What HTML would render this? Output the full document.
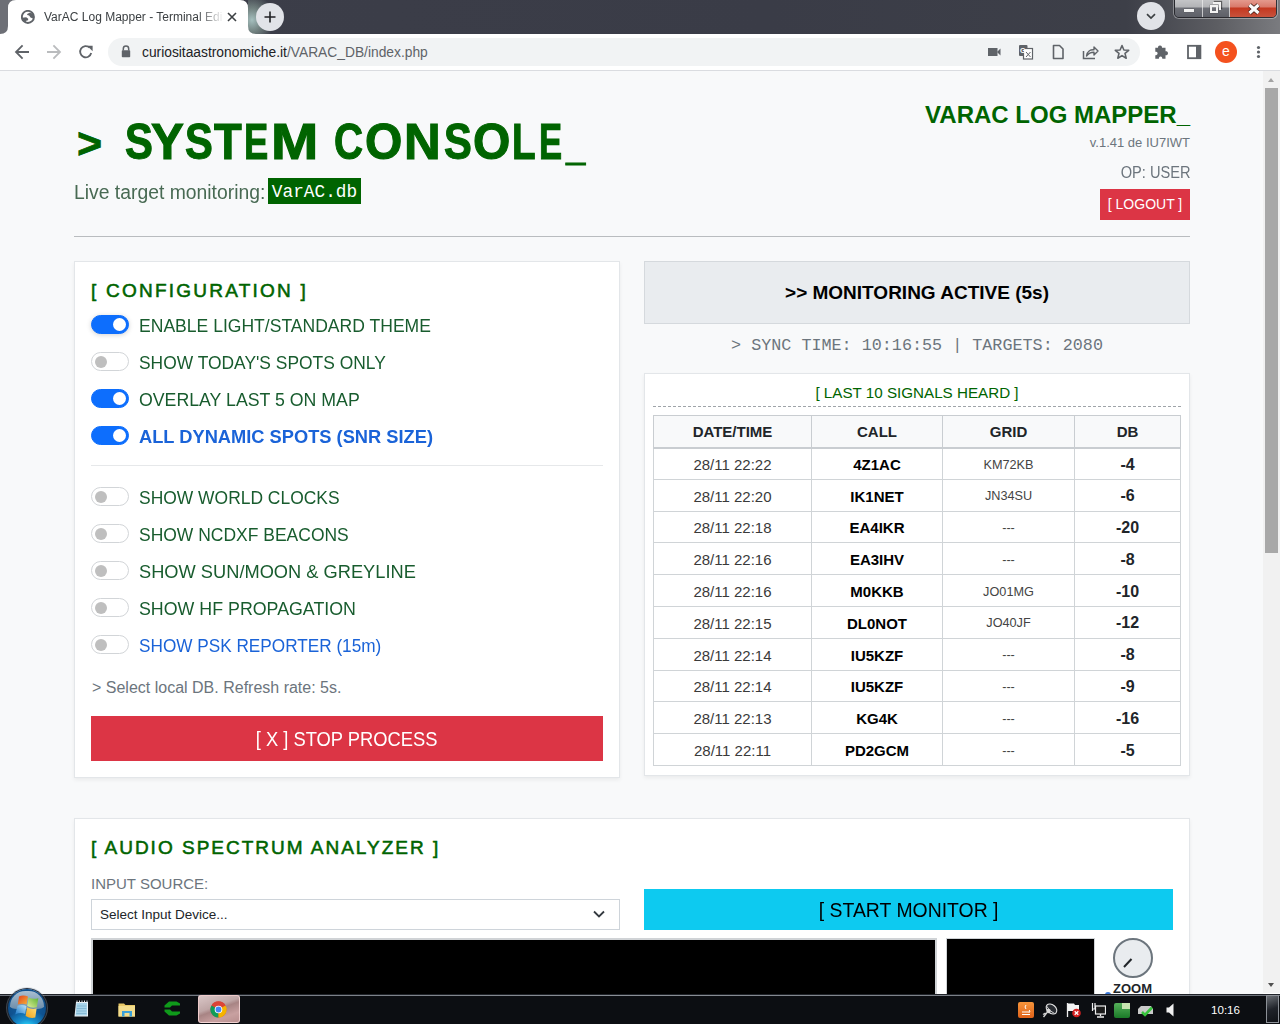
<!DOCTYPE html>
<html><head><meta charset="utf-8">
<style>
*{box-sizing:border-box;margin:0;padding:0}
html,body{width:1280px;height:1024px;overflow:hidden;background:#f8f9fa;font-family:"Liberation Sans",sans-serif;position:relative}
.abs{position:absolute}
/* chrome */
#strip{left:0;top:0;width:1280px;height:34px;background:linear-gradient(90deg,#6d6f76 0,#6d6f76 16px,#3c3e49 16px,#3a3c47 60%,#3d3f48 88%,#5c5d62 95%,#7a7b7f 100%)}
#tab{left:8px;top:0;width:240px;height:34px;background:#fff;border-radius:8px 8px 0 0}
#toolbar{left:0;top:34px;width:1280px;height:36px;background:#fff}
#tbline{left:0;top:70px;width:1280px;height:1px;background:#dadce0}
#omni{left:108px;top:38px;width:1032px;height:28px;background:#f1f3f4;border-radius:14px}
.ctext{font-size:12px;color:#3c4043}
/* page */
#page{left:0;top:71px;width:1263px;height:924px;background:#f8f9fa;overflow:hidden}
#sb{left:1263px;top:71px;width:17px;height:924px;background:#f1f1f1}
#sbthumb{left:1265px;top:88px;width:13px;height:465px;background:#a8a8a8}
.green{color:#006400}
.card{position:absolute;background:#fff;border:1px solid #e3e6e9;box-shadow:0 2px 4px rgba(0,0,0,.06)}
.cfgtitle{font-size:19px;font-weight:normal;-webkit-text-stroke:0.55px #006400;letter-spacing:2.23px;white-space:nowrap}
.sw{position:absolute;left:91px;width:38px;height:19px;border-radius:10px;background:#fff;border:1px solid #d2d5d8}
.sw::after{content:"";position:absolute;left:2.5px;top:2.5px;width:12px;height:12px;border-radius:50%;background:#bfbfbf}
.sw.on{background:#0d6efd;border-color:#0d6efd}
.sw.on::after{left:21px;background:#fff;width:13px;height:13px;top:2px}
.lbl{position:absolute;left:139px;font-size:18px;color:#185c2e;white-space:nowrap;transform-origin:0 0}
.blue{color:#1a63d8}
.b{font-weight:bold}
.tbl{border-collapse:collapse;table-layout:fixed;width:527px;background:#fff}
.tbl th,.tbl td{border:1px solid #d0d4d7;text-align:center;padding:0;white-space:nowrap}
.tbl th{height:32px;font-size:15px;font-weight:bold;color:#212529;background:#f8f9fa;border-bottom:2px solid #c9cdd1;border-color:#c9cdd1}
.tbl td{height:31.8px;color:#212529;padding-top:2px}
.tbl td.dt{font-size:15px;color:#3a3a3a}
.tbl td.cl{font-size:15px;font-weight:bold;color:#000}
.tbl td.gr{font-size:12.7px;color:#444}
.tbl td.db{font-size:16px;font-weight:bold;color:#212529}
/* taskbar */
#taskbar{left:0;top:994px;width:1280px;height:30px;background:#0c0e12;border-top:1px solid #202329}
</style></head><body>
<div id="strip" class="abs"></div>
<div class="abs" style="left:248px;top:0;width:50px;height:34px;background:radial-gradient(ellipse 22px 26px at 4px 20px,rgba(170,198,196,.95) 0,rgba(150,175,165,.6) 45%,rgba(60,62,73,0) 100%)"></div>
<svg class="abs" style="left:0;top:0" width="260" height="34" viewBox="0 0 260 34">
<path d="M0 34 Q8 34 8 26 L8 8 Q8 0 16 0 L240 0 Q248 0 248 8 L248 26 Q248 34 256 34 Z" fill="#fff"/>
</svg>
<svg class="abs" style="left:21px;top:10px" width="14" height="14" viewBox="0 0 14 14"><circle cx="6.9" cy="6.9" r="6.05" fill="#fff" stroke="#5f6368" stroke-width="1.9"/><path d="M6.2 4.1 L9 2.4 L11.8 3.8 L13.2 7.8 L11.8 8.4 L9.5 7.4 L8.1 5.6 L6.2 5.1 Z" fill="#5f6368"/><path d="M1 7.8 L5.2 7.3 L7.2 8.8 L7.1 10.2 L5.3 10.8 L4.4 12.2 L2.5 11.6 L1 9.5 Z" fill="#5f6368"/></svg>
<div class="abs" style="left:44px;top:10px;width:180px;height:18px;overflow:hidden;font-size:12px;color:#3c4043;white-space:nowrap;-webkit-mask-image:linear-gradient(90deg,#000 85%,transparent 100%)">VarAC Log Mapper - Terminal Edi</div>
<svg class="abs" style="left:226px;top:11px" width="12" height="12" viewBox="0 0 12 12"><path d="M2 2 L10 10 M10 2 L2 10" stroke="#3c4043" stroke-width="1.6"/></svg>
<div class="abs" style="left:256px;top:3px;width:28px;height:28px;border-radius:50%;background:#e1e3e8"></div>
<svg class="abs" style="left:264px;top:11px" width="12" height="12" viewBox="0 0 12 12"><path d="M6 0.5 V11.5 M0.5 6 H11.5" stroke="#202124" stroke-width="1.6"/></svg>
<div class="abs" style="left:1137px;top:2px;width:28px;height:28px;border-radius:50%;background:#e1e3e8"></div>
<svg class="abs" style="left:1145px;top:10px" width="12" height="12" viewBox="0 0 12 12"><path d="M2 4.2 L6 8 L10 4.2" fill="none" stroke="#3c4043" stroke-width="1.7"/></svg>
<!-- window buttons -->
<div class="abs" style="left:1174px;top:-3px;width:103px;height:21px;border:1px solid rgba(30,30,35,.8);border-radius:0 0 5px 5px;box-shadow:0 0 0 1px rgba(255,255,255,.35);overflow:hidden">
 <div class="abs" style="left:0;top:0;width:28px;height:20px;background:linear-gradient(#c9cacc 0,#b2b3b6 45%,#6e7077 50%,#5c5e66 100%);border-right:1px solid rgba(240,240,240,.7)"></div>
 <div class="abs" style="left:28px;top:0;width:27px;height:20px;background:linear-gradient(#c9cacc 0,#b2b3b6 45%,#6e7077 50%,#5c5e66 100%);border-right:1px solid rgba(240,240,240,.7)"></div>
 <div class="abs" style="left:55px;top:0;width:48px;height:20px;background:linear-gradient(#e7a397 0,#d9796a 45%,#c43820 50%,#c8553f 100%)"></div>
 <div class="abs" style="left:9px;top:11px;width:10px;height:3px;background:#f2f2f2;box-shadow:0 0 1px #333"></div>
 <div class="abs" style="left:38px;top:4px;width:8px;height:8px;border-top:2px solid #f2f2f2;border-right:2px solid #f2f2f2;box-shadow:1px -1px 1px rgba(0,0,0,.5)"></div>
 <div class="abs" style="left:35px;top:7px;width:8px;height:8px;border:2px solid #f2f2f2;box-shadow:0 0 1px #333"></div>
 <svg class="abs" style="left:72px;top:5px" width="14" height="12" viewBox="0 0 14 12"><path d="M2.5 2 L11.5 10 M11.5 2 L2.5 10" stroke="#3a1a14" stroke-width="4.8"/><path d="M2.5 2 L11.5 10 M11.5 2 L2.5 10" stroke="#fafafa" stroke-width="3.2"/></svg>
</div>
<div id="toolbar" class="abs"></div>
<div id="tbline" class="abs"></div>
<svg class="abs" style="left:14px;top:44px" width="16" height="16" viewBox="0 0 16 16"><path d="M15 8 H2.5 M8.6 1.4 L2 8 L8.6 14.6" fill="none" stroke="#5f6368" stroke-width="1.8"/></svg>
<svg class="abs" style="left:46px;top:44px" width="16" height="16" viewBox="0 0 16 16"><path d="M1 8 H13.5 M7.4 1.4 L14 8 L7.4 14.6" fill="none" stroke="#babcbe" stroke-width="1.8"/></svg>
<svg class="abs" style="left:78px;top:44px" width="16" height="16" viewBox="0 0 16 16"><path d="M13.2 9 A5.6 5.6 0 1 1 11.6 3.6" fill="none" stroke="#5f6368" stroke-width="1.8"/><path d="M9.2 1.8 L14.6 1.8 L14.6 7.2 Z" fill="#5f6368"/></svg>
<div id="omni" class="abs"></div>
<svg class="abs" style="left:121px;top:45px" width="10" height="13" viewBox="0 0 10 13"><path d="M2.3 5.5 V3.8 A2.7 2.7 0 0 1 7.7 3.8 V5.5" fill="none" stroke="#5f6368" stroke-width="1.5"/><rect x="0.8" y="5.2" width="8.4" height="7" rx="0.8" fill="#5f6368"/></svg>
<div class="abs" style="left:142px;top:45px;font-size:13.8px;color:#202124;white-space:nowrap">curiositaastronomiche.it<span style="color:#5f6368">/VARAC_DB/index.php</span></div>
<svg class="abs" style="left:986px;top:45px" width="16" height="14" viewBox="0 0 16 14"><rect x="2" y="3" width="9.5" height="8" fill="#5f6368"/><path d="M11 7 L14.5 3.5 V10.5 Z" fill="#5f6368"/></svg>
<svg class="abs" style="left:1018px;top:44px" width="16" height="16" viewBox="0 0 16 16"><rect x="1" y="1" width="8.5" height="11" rx="1" fill="#5f6368"/><rect x="5.5" y="4.5" width="9" height="10.5" fill="#fff" stroke="#5f6368" stroke-width="1.2"/><text x="2" y="9" font-size="7" font-family="Liberation Sans" font-weight="bold" fill="#fff">G</text><path d="M8 8 L12.5 13 M12.5 8 L8 13" stroke="#5f6368" stroke-width="1"/></svg>
<svg class="abs" style="left:1050px;top:44px" width="16" height="16" viewBox="0 0 16 16"><path d="M3.5 1.5 H9.5 L13 5 V14.5 H3.5 Z" fill="none" stroke="#5f6368" stroke-width="1.6" stroke-linejoin="round"/></svg>
<svg class="abs" style="left:1082px;top:44px" width="17" height="16" viewBox="0 0 17 16"><path d="M1.5 7 V14.5 H13" fill="none" stroke="#5f6368" stroke-width="1.5"/><path d="M4.5 12 C5 7.5 8.5 5.5 12 5.8 V3 L16 7 L12 11 V8.3 C9 8.2 6.5 9.5 4.5 12 Z" fill="none" stroke="#5f6368" stroke-width="1.4" stroke-linejoin="round"/></svg>
<svg class="abs" style="left:1114px;top:44px" width="16" height="16" viewBox="0 0 16 16"><path d="M8 1.5 L9.9 6 L14.7 6.3 L11 9.4 L12.2 14.2 L8 11.6 L3.8 14.2 L5 9.4 L1.3 6.3 L6.1 6 Z" fill="none" stroke="#5f6368" stroke-width="1.6" stroke-linejoin="round"/></svg>
<svg class="abs" style="left:1154px;top:44px" width="16" height="16" viewBox="0 0 16 16"><path d="M6 1.5 C7.8 1.5 8 2.6 8 3.8 H11.5 V7.3 C12.6 7.3 14 7.6 14 9.3 C14 11 12.6 11.3 11.5 11.3 V14.8 H8.3 C8.3 13.6 8 12.5 6.6 12.5 C5.2 12.5 4.9 13.6 4.9 14.8 H1.3 V11.2 C2.5 11.2 3.6 10.9 3.6 9.5 C3.6 8.1 2.5 7.8 1.3 7.8 V3.8 H4 C4 2.6 4.2 1.5 6 1.5 Z" fill="#5f6368"/></svg>
<svg class="abs" style="left:1186px;top:44px" width="16" height="16" viewBox="0 0 16 16"><rect x="2" y="1.8" width="12.4" height="12.4" fill="none" stroke="#5f6368" stroke-width="1.8"/><rect x="10" y="1.8" width="4.4" height="12.4" fill="#5f6368"/></svg>
<div class="abs" style="left:1215px;top:41px;width:22px;height:22px;border-radius:50%;background:#f4511e;color:#fff;font-size:14px;text-align:center;line-height:21px">e</div>
<svg class="abs" style="left:1254px;top:44px" width="9" height="16" viewBox="0 0 9 16"><circle cx="4.5" cy="3.5" r="1.6" fill="#5f6368"/><circle cx="4.5" cy="8" r="1.6" fill="#5f6368"/><circle cx="4.5" cy="12.5" r="1.6" fill="#5f6368"/></svg>
<div id="page" class="abs"></div>
<div id="sb" class="abs"></div>
<div id="sbthumb" class="abs"></div>

<!-- header -->
<div class="abs green" style="left:77px;top:119px;font-size:43px;font-weight:bold;white-space:nowrap;-webkit-text-stroke:0.8px #006400">&gt;</div><div class="abs green" style="left:0;top:112.5px;font-size:50px;font-weight:bold;white-space:nowrap;width:0;height:0;-webkit-text-stroke:1.1px #006400"><span class="abs" style="left:124.58px;top:0;transform:scaleX(0.836);transform-origin:0 0">S</span><span class="abs" style="left:151.02px;top:0;transform:scaleX(0.984);transform-origin:0 0">Y</span><span class="abs" style="left:184.73px;top:0;transform:scaleX(0.834);transform-origin:0 0">S</span><span class="abs" style="left:213.75px;top:0;transform:scaleX(0.908);transform-origin:0 0">T</span><span class="abs" style="left:244.42px;top:0;transform:scaleX(0.728);transform-origin:0 0">E</span><span class="abs" style="left:270.59px;top:0;transform:scaleX(1.136);transform-origin:0 0">M</span><span class="abs" style="left:333.99px;top:0;transform:scaleX(0.806);transform-origin:0 0">C</span><span class="abs" style="left:364.98px;top:0;transform:scaleX(0.960);transform-origin:0 0">O</span><span class="abs" style="left:404.45px;top:0;transform:scaleX(1.017);transform-origin:0 0">N</span><span class="abs" style="left:444.13px;top:0;transform:scaleX(0.834);transform-origin:0 0">S</span><span class="abs" style="left:472.78px;top:0;transform:scaleX(0.960);transform-origin:0 0">O</span><span class="abs" style="left:512.38px;top:0;transform:scaleX(0.773);transform-origin:0 0">L</span><span class="abs" style="left:539.32px;top:0;transform:scaleX(0.693);transform-origin:0 0">E</span><span class="abs" style="left:565.50px;top:0;transform:scaleX(0.697);transform-origin:0 0">_</span></div>
<div class="abs" style="left:74px;top:181px;font-size:20px;color:#486a53;white-space:nowrap;transform:scaleX(0.967);transform-origin:0 0">Live target monitoring:</div><div class="abs" style="left:268px;top:178px;width:93px;height:26px;background:#006400;color:#fff;font-family:'Liberation Mono',monospace;font-size:17.8px;line-height:28px;text-align:center">VarAC.db</div>
<div class="abs" style="left:74px;top:236px;width:1116px;height:1px;background:#b9bcbf"></div>

<div class="abs green" style="right:90px;top:101px;font-size:24px;font-weight:bold;white-space:nowrap">VARAC LOG MAPPER_</div>
<div class="abs" style="right:90px;top:135px;font-size:13px;color:#6c757d;white-space:nowrap">v.1.41 de IU7IWT</div>
<div class="abs" style="right:90px;top:164px;font-size:16px;color:#6c757d;white-space:nowrap;transform:scaleX(0.913);transform-origin:100% 0">OP: USER</div>
<div class="abs" style="left:1100px;top:189px;width:90px;height:31px;background:#dc3545;color:#fff;font-size:14px;text-align:center;line-height:31px">[ LOGOUT ]</div>

<!-- config card -->
<div class="card" style="left:74px;top:261px;width:546px;height:517px"></div>
<div class="abs green cfgtitle" style="left:91px;top:280px">[ CONFIGURATION ]</div>
<div class="sw on" style="top:315px;box-shadow:0 1px 5px rgba(0,0,0,.18)"></div><div class="lbl" style="top:316px;transform:scaleX(0.975)">ENABLE LIGHT/STANDARD THEME</div>
<div class="sw" style="top:352px"></div><div class="lbl" style="top:353px;transform:scaleX(0.967)">SHOW TODAY'S SPOTS ONLY</div>
<div class="sw on" style="top:389px"></div><div class="lbl" style="top:390px;transform:scaleX(0.985)">OVERLAY LAST 5 ON MAP</div>
<div class="sw on" style="top:426px"></div><div class="lbl blue b" style="top:427px;transform:scaleX(1.015)">ALL DYNAMIC SPOTS (SNR SIZE)</div>
<div class="abs" style="left:91px;top:465px;width:512px;height:1px;background:#e6e8ea"></div>
<div class="sw" style="top:487px"></div><div class="lbl" style="top:488px;transform:scaleX(0.969)">SHOW WORLD CLOCKS</div>
<div class="sw" style="top:524px"></div><div class="lbl" style="top:525px;transform:scaleX(0.971)">SHOW NCDXF BEACONS</div>
<div class="sw" style="top:561px"></div><div class="lbl" style="top:562px;transform:scaleX(1.014)">SHOW SUN/MOON &amp; GREYLINE</div>
<div class="sw" style="top:598px"></div><div class="lbl" style="top:599px;transform:scaleX(0.989)">SHOW HF PROPAGATION</div>
<div class="sw" style="top:635px"></div><div class="lbl blue" style="top:636px;transform:scaleX(0.955)">SHOW PSK REPORTER (15m)</div>
<div class="abs" style="left:92px;top:679px;font-size:16px;color:#6c757d;white-space:nowrap">&gt; Select local DB. Refresh rate: 5s.</div>
<div class="abs" style="left:91px;top:716px;width:512px;height:45px;background:#dc3545;color:#fff;font-size:19.5px;text-align:center;line-height:47px"><span style="display:inline-block;transform:scaleX(0.94)">[ X ] STOP PROCESS</span></div>
<!-- monitoring -->
<div class="abs" style="left:644px;top:261px;width:546px;height:63px;background:#e9ecef;border:1px solid #d5d9dd;text-align:center;font-size:19px;font-weight:bold;color:#000;line-height:62px">&gt;&gt; MONITORING ACTIVE (5s)</div>
<div class="abs" style="left:644px;top:335.5px;width:546px;text-align:center;font-family:'Liberation Mono',monospace;font-size:16.75px;color:#6c757d;white-space:nowrap">&gt; SYNC TIME: 10:16:55 | TARGETS: 2080</div>
<div class="card" style="left:644px;top:373px;width:546px;height:403px"></div>
<div class="abs green" style="left:644px;top:384px;width:546px;text-align:center;font-size:15.2px;white-space:nowrap">[ LAST 10 SIGNALS HEARD ]</div>
<div class="abs" style="left:653px;top:406px;width:528px;height:0;border-top:1px dashed #9fa4a9"></div>
<table class="abs tbl" style="left:653px;top:415px">
<colgroup><col style="width:158px"><col style="width:131px"><col style="width:132px"><col style="width:106px"></colgroup>
<tr class="hd"><th>DATE/TIME</th><th>CALL</th><th>GRID</th><th>DB</th></tr>
<tr><td class="dt">28/11 22:22</td><td class="cl">4Z1AC</td><td class="gr">KM72KB</td><td class="db">-4</td></tr>
<tr><td class="dt">28/11 22:20</td><td class="cl">IK1NET</td><td class="gr">JN34SU</td><td class="db">-6</td></tr>
<tr><td class="dt">28/11 22:18</td><td class="cl">EA4IKR</td><td class="gr">---</td><td class="db">-20</td></tr>
<tr><td class="dt">28/11 22:16</td><td class="cl">EA3IHV</td><td class="gr">---</td><td class="db">-8</td></tr>
<tr><td class="dt">28/11 22:16</td><td class="cl">M0KKB</td><td class="gr">JO01MG</td><td class="db">-10</td></tr>
<tr><td class="dt">28/11 22:15</td><td class="cl">DL0NOT</td><td class="gr">JO40JF</td><td class="db">-12</td></tr>
<tr><td class="dt">28/11 22:14</td><td class="cl">IU5KZF</td><td class="gr">---</td><td class="db">-8</td></tr>
<tr><td class="dt">28/11 22:14</td><td class="cl">IU5KZF</td><td class="gr">---</td><td class="db">-9</td></tr>
<tr><td class="dt">28/11 22:13</td><td class="cl">KG4K</td><td class="gr">---</td><td class="db">-16</td></tr>
<tr><td class="dt">28/11 22:11</td><td class="cl">PD2GCM</td><td class="gr">---</td><td class="db">-5</td></tr>
</table>
<!-- audio card -->
<div class="card" style="left:74px;top:818px;width:1116px;height:300px"></div>
<div class="abs green cfgtitle" style="left:91px;top:837px;letter-spacing:2.0px">[ AUDIO SPECTRUM ANALYZER ]</div>
<div class="abs" style="left:91px;top:875px;font-size:15px;color:#6c757d;white-space:nowrap">INPUT SOURCE:</div>
<div class="abs" style="left:91px;top:899px;width:529px;height:31px;background:#fff;border:1px solid #ced4da;font-size:13.5px;color:#212529;padding-left:8px;line-height:30px">Select Input Device...</div>
<svg class="abs" style="left:592px;top:908px" width="14" height="12" viewBox="0 0 14 12"><path d="M2 3.5 L7 8.5 L12 3.5" fill="none" stroke="#343a40" stroke-width="1.8"/></svg>
<div class="abs" style="left:644px;top:889px;width:529px;height:41px;background:#0dcaf0;color:#000;font-size:20px;text-align:center;line-height:43px"><span style="display:inline-block;transform:scaleX(0.97)">[ START MONITOR ]</span></div>
<div class="abs" style="left:91px;top:938px;width:846px;height:80px;background:#000;border:2px solid #d0d3d6"></div>
<div class="abs" style="left:946px;top:938px;width:149px;height:80px;background:#000;border:1px solid #d0d3d6"></div>
<div class="abs" style="left:1113px;top:938px;width:40px;height:40px;border-radius:50%;background:#e9ecef;border:2px solid #6c757d"></div>
<div class="abs" style="left:1124px;top:966px;width:11px;height:2px;background:#212529;transform:rotate(-47deg);transform-origin:left center"></div>
<div class="abs" style="left:1113px;top:981px;font-size:13px;font-weight:bold;color:#212529">ZOOM</div>
<div class="abs" style="left:1105px;top:992px;width:6px;height:3px;border-radius:3px 3px 0 0;background:#3b78d8"></div>

<div class="abs" style="left:1268px;top:78px;width:0;height:0;border-left:3.5px solid transparent;border-right:3.5px solid transparent;border-bottom:4px solid #a3a3a3"></div>
<div class="abs" style="left:1268px;top:983px;width:0;height:0;border-left:3.5px solid transparent;border-right:3.5px solid transparent;border-top:4px solid #505050"></div>
<div class="abs" style="left:1263px;top:993px;width:17px;height:1px;background:#fff"></div>
<div id="taskbar" class="abs"></div>
<div class="abs" style="left:0;top:995px;width:1280px;height:1px;background:linear-gradient(90deg,#6b7078,#8a8f96 50%,#6b7078)"></div>
<!-- start orb -->
<div class="abs" style="left:8px;top:989px;width:38px;height:38px;border-radius:50%;background:radial-gradient(ellipse 60% 45% at 50% 100%,#2ee0ff 0,#1690d0 45%,rgba(12,80,150,0) 100%),radial-gradient(circle at 50% 50%,#1565a8 0,#0e4f8c 70%,#243a52 100%);box-shadow:0 0 0 1px rgba(20,30,45,.9),0 0 0 2px rgba(160,175,190,.35)"></div>
<div class="abs" style="left:10px;top:991px;width:34px;height:18px;border-radius:17px 17px 8px 8px/17px 17px 3px 3px;background:linear-gradient(#c5d3de 0,#9fb3c4 50%,#7f98ae 100%);opacity:.85"></div>
<svg class="abs" style="left:14px;top:995px" width="26" height="24" viewBox="0 0 26 24">
<defs><linearGradient id="gr" x1="0" y1="0" x2="1" y2="1"><stop offset="0" stop-color="#e0401e"/><stop offset="1" stop-color="#f7b238"/></linearGradient>
<linearGradient id="gg" x1="1" y1="0" x2="0" y2="1"><stop offset="0" stop-color="#5ab130"/><stop offset="1" stop-color="#e2f09a"/></linearGradient>
<linearGradient id="gb" x1="0" y1="1" x2="1" y2="0"><stop offset="0" stop-color="#1a78c8"/><stop offset="1" stop-color="#bfe6fb"/></linearGradient>
<linearGradient id="gy" x1="0" y1="1" x2="1" y2="0"><stop offset="0" stop-color="#f0a018"/><stop offset="1" stop-color="#ffe07a"/></linearGradient></defs>
<path d="M5 1.5 Q9 -0.5 14 1.5 L12.6 9.6 Q8.5 7.8 3.8 9.6 Z" fill="url(#gr)"/>
<path d="M14.6 2.4 Q19 4.6 24.3 3.2 L22.8 12.3 Q17.6 13.6 13.2 11 Z" fill="url(#gg)"/>
<path d="M3.5 10.8 Q8 9 12.4 11 L11.2 19 Q6.5 17 1.2 19.4 Z" fill="url(#gb)"/>
<path d="M13 12.2 Q17.5 14.8 22.6 13.5 L21.3 22.6 Q16 23.8 11.6 21 Z" fill="url(#gy)"/>
</svg>
<!-- notepad -->
<svg class="abs" style="left:73px;top:1000px" width="17" height="17" viewBox="0 0 17 17"><path d="M3 2 H15 V16.5 H1.5 Z" fill="#eef3f7"/><path d="M3.5 3 H14 V15.5 H2.5 Z" fill="#a9d4ea"/><path d="M4 6 H13.5 M3.8 8.5 H13.5 M3.5 11 H13.5 M3.2 13.5 H13.5" stroke="#7fb4d0" stroke-width="0.8"/><path d="M4 0.5 V3 M6.5 0.5 V3 M9 0.5 V3 M11.5 0.5 V3 M14 0.5 V3" stroke="#dfe7ee" stroke-width="1"/></svg>
<!-- folder -->
<svg class="abs" style="left:118px;top:1002px" width="18" height="15" viewBox="0 0 18 15"><path d="M0.5 1.5 H6 L7.5 3 H17 V14.5 H0.5 Z" fill="#e8c766"/><path d="M0.5 4 H17 V14.5 H0.5 Z" fill="#f3dc8d"/><path d="M4 14.5 V9 H14 V14.5 H11.5 V11 H6.5 V14.5 Z" fill="#3aa0d8"/></svg>
<!-- green c -->
<svg class="abs" style="left:164px;top:1001px" width="17" height="15" viewBox="0 0 17 15"><path d="M16 2.5 L12.5 0.5 H5 L0.5 4.5 V6.5 H6 L8 4.5 H16 Z" fill="#0f9a1a"/><path d="M16 12.5 L12.5 14.5 H5 L0.5 10.5 V8.5 H6 L8 10.5 H16 Z" fill="#0f9a1a"/></svg>
<!-- chrome btn -->
<div class="abs" style="left:198px;top:995px;width:42px;height:28px;border-radius:3px;border:1px solid rgba(255,220,220,.75);background:linear-gradient(160deg,#d9c6c6 0,#bfa6a6 40%,#a88484 50%,#c8a0a0 75%,#b99090 100%)"></div>
<svg class="abs" style="left:210px;top:1001px" width="17" height="17" viewBox="0 0 17 17"><circle cx="8.5" cy="8.5" r="8" fill="#db4437"/><path d="M8.5 8.5 L1.5 4.5 A8 8 0 0 0 8.5 16.5 Z" fill="#0f9d58"/><path d="M8.5 8.5 L15.5 4.5 A8 8 0 0 1 8.5 16.5 Z" fill="#f4b400"/><path d="M8.5 4.5 H15.5 A8 8 0 0 0 1.5 4.5 Z" fill="#db4437"/><circle cx="8.5" cy="8.5" r="3.8" fill="#fff"/><circle cx="8.5" cy="8.5" r="2.9" fill="#4285f4"/></svg>
<!-- tray -->
<div class="abs" style="left:1018px;top:1002px;width:16px;height:16px;border-radius:2px;background:linear-gradient(#f7953b,#e0621a)"></div>
<svg class="abs" style="left:1020px;top:1004px" width="12" height="12" viewBox="0 0 12 12"><path d="M6 1 Q4 3 6 5 M2 8 H10 M2 10.5 H10 M9 6 Q11 7 9 8.5" fill="none" stroke="#fff" stroke-width="1"/></svg>
<svg class="abs" style="left:1042px;top:1002px" width="16" height="16" viewBox="0 0 16 16"><ellipse cx="9.5" cy="7" rx="6" ry="4.2" transform="rotate(40 9.5 7)" fill="#2a2d33" stroke="#e6e6e6" stroke-width="1.1"/><path d="M4.5 4 Q7 9 12.5 11.5" fill="none" stroke="#cfcfcf" stroke-width="1"/><circle cx="6.5" cy="9" r="2.2" fill="#d8d8d8"/><path d="M1.5 15 L5 10.5 M1 12.5 L3.5 11" stroke="#d0d0d0" stroke-width="1.4"/></svg>
<svg class="abs" style="left:1066px;top:1002px" width="16" height="16" viewBox="0 0 16 16"><path d="M1.5 1 V15" stroke="#eee" stroke-width="1.3"/><path d="M2 1.5 H8 L9 3 H13 V9 H2 Z" fill="#f4f4f4"/><circle cx="10.5" cy="11" r="4.3" fill="#d42020"/><path d="M8.7 9.2 L12.3 12.8 M12.3 9.2 L8.7 12.8" stroke="#fff" stroke-width="1.3"/></svg>
<svg class="abs" style="left:1091px;top:1002px" width="15" height="16" viewBox="0 0 15 16"><rect x="4.5" y="4" width="10" height="8" fill="#1b1b1b" stroke="#eee" stroke-width="1.2"/><path d="M9.5 12 V14 M6 15 H13" stroke="#eee" stroke-width="1.3"/><path d="M1.5 1 V9 M1 7 H4.5 M4 1 V7" stroke="#eee" stroke-width="1.2"/></svg>
<div class="abs" style="left:1114px;top:1003px;width:16px;height:15px;border-radius:2px;background:linear-gradient(#56b05a,#1a7a28)"></div>
<div class="abs" style="left:1122px;top:1003px;width:8px;height:6px;background:#c8e6b0"></div>
<svg class="abs" style="left:1137px;top:1003px" width="17" height="15" viewBox="0 0 17 15"><path d="M1 6 L4 3 H14 L16 6 V11 H1 Z" fill="#c9c9c9"/><path d="M5 9 L8 12 L15 4.5" fill="none" stroke="#37c33c" stroke-width="2.6"/></svg>
<svg class="abs" style="left:1166px;top:1003px" width="8" height="14" viewBox="0 0 8 14"><path d="M0.5 4.5 H3 L7.5 0.5 V13.5 L3 9.5 H0.5 Z" fill="#f0f0f0"/></svg>
<div class="abs" style="left:1211px;top:1002.5px;font-size:11.6px;color:#fff;white-space:nowrap">10:16</div>
<div class="abs" style="left:1266px;top:995px;width:13px;height:28px;border:1px solid #8c9097;background:linear-gradient(160deg,#6a6e74,#20232a 50%,#111318)"></div>
</body></html>
